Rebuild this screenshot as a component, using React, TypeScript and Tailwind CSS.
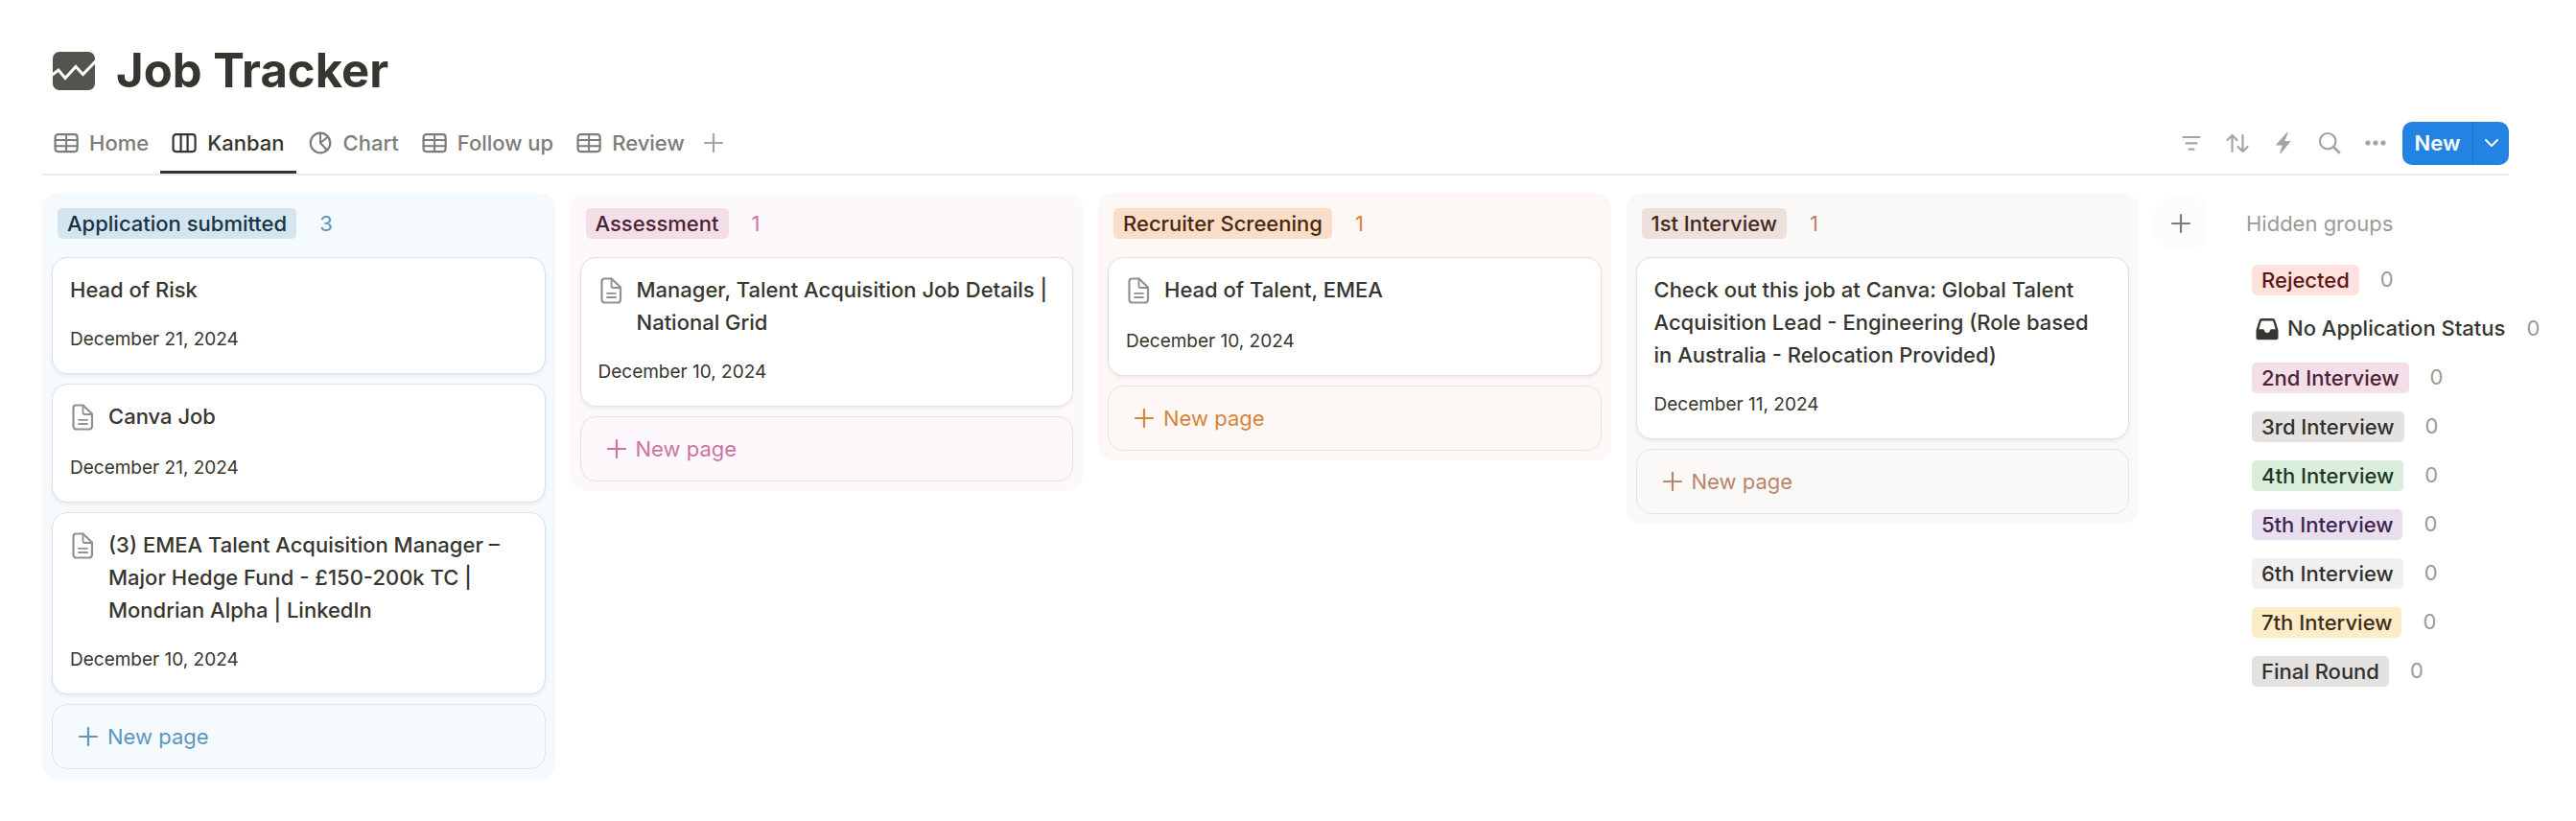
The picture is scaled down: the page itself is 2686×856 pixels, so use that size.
import type { ReactNode } from 'react'
import { clsx } from 'clsx'

interface Card {
    title: string
    date: string
    hasPage?: boolean
}

interface Group {
    name: string
    cards: Card[]
    column: string
    tag: string
    accent: string
}

interface HiddenGroup {
    name: string
    tag?: string
}

const TABS = [
    { label: 'Home', icon: <TableIcon /> },
    { label: 'Kanban', icon: <BoardIcon />, active: true },
    { label: 'Chart', icon: <ChartIcon /> },
    { label: 'Follow up', icon: <TableIcon /> },
    { label: 'Review', icon: <TableIcon /> },
]

const TOOLS = [
    { label: 'Filter', icon: <FilterIcon /> },
    { label: 'Sort', icon: <SortIcon /> },
    { label: 'Automations', icon: <BoltIcon /> },
    { label: 'Search', icon: <SearchIcon /> },
    { label: 'More', icon: <DotsIcon /> },
]

const GROUPS: Group[] = [
    {
        name: 'Application submitted',
        column: 'bg-[#f4fafd]',
        tag: 'bg-[#d3e5ef] text-[#183347]',
        accent: 'text-[#5b97bd]',
        cards: [
            { title: 'Head of Risk', date: 'December 21, 2024' },
            { title: 'Canva Job', date: 'December 21, 2024', hasPage: true },
            {
                title: '(3) EMEA Talent Acquisition Manager – Major Hedge Fund - £150-200k TC | Mondrian Alpha | LinkedIn',
                date: 'December 10, 2024',
                hasPage: true,
            },
        ],
    },
    {
        name: 'Assessment',
        column: 'bg-[#fcf8fc]',
        tag: 'bg-[#f4dfe8] text-[#4c2337]',
        accent: 'text-[#cd749f]',
        cards: [
            { title: 'Manager, Talent Acquisition Job Details | National Grid', date: 'December 10, 2024', hasPage: true },
        ],
    },
    {
        name: 'Recruiter Screening',
        column: 'bg-[#fdf8f5]',
        tag: 'bg-[#fadec9] text-[#49290e]',
        accent: 'text-[#d9833b]',
        cards: [{ title: 'Head of Talent, EMEA', date: 'December 10, 2024', hasPage: true }],
    },
    {
        name: '1st Interview',
        column: 'bg-[#faf9f8]',
        tag: 'bg-[#eee0da] text-[#442a1e]',
        accent: 'text-[#bb846c]',
        cards: [
            {
                title: 'Check out this job at Canva: Global Talent Acquisition Lead - Engineering (Role based in Australia - Relocation Provided)',
                date: 'December 11, 2024',
            },
        ],
    },
]

const HIDDEN_GROUPS: HiddenGroup[] = [
    { name: 'Rejected', tag: 'bg-[#ffe2dd] text-[#5d1715]' },
    { name: 'No Application Status' },
    { name: '2nd Interview', tag: 'bg-[#f4dfe9] text-[#4c2337]' },
    { name: '3rd Interview', tag: 'bg-[#e3e2e0] text-[#32302c]' },
    { name: '4th Interview', tag: 'bg-[#dbeddb] text-[#1c3829]' },
    { name: '5th Interview', tag: 'bg-[#e8deee] text-[#412454]' },
    { name: '6th Interview', tag: 'bg-[#f0f0f0] text-[#32302c]' },
    { name: '7th Interview', tag: 'bg-[#fdecc8] text-[#402c1b]' },
    { name: 'Final Round', tag: 'bg-[#e3e2e0] text-[#32302c]' },
]

function LineIcon({ className, children }: { className?: string; children: ReactNode }) {
    return (
        <svg
            viewBox="0 0 28 28"
            className={clsx('size-7 shrink-0', className)}
            fill="none"
            stroke="currentColor"
            strokeWidth="2.2"
            strokeLinecap="round"
            strokeLinejoin="round"
            aria-hidden="true"
        >
            {children}
        </svg>
    )
}

function TrackerIcon() {
    return (
        <svg viewBox="0 0 44 40" className="h-10 w-11 shrink-0" aria-hidden="true">
            <rect width="44" height="40" rx="7" fill="#55534e" />
            <path d="M-1 24.500 L6 19 L13 27.500 L24 15.500 L31.500 23.500 L45 9.500" fill="none" stroke="#fff" strokeWidth="3" />
        </svg>
    )
}

function TableIcon() {
    return (
        <LineIcon>
            <rect x="1.600" y="5.100" width="23" height="18" rx="3" />
            <path d="M1.600 11h23M1.600 17.200h23M13.100 5.100v18" strokeWidth="2" />
        </LineIcon>
    )
}

function BoardIcon() {
    return (
        <LineIcon>
            <rect x="1.600" y="5.100" width="23" height="18" rx="3" />
            <path d="M9.600 5.100v18M16.600 5.100v18" />
        </LineIcon>
    )
}

function ChartIcon() {
    return (
        <LineIcon>
            <circle cx="13" cy="14" r="10.300" />
            <path d="M13 3.700V14l8-6.500M13 14l7 7.500" strokeWidth="2" />
        </LineIcon>
    )
}

function PlusIcon({ className }: { className?: string }) {
    return (
        <LineIcon className={className}>
            <path d="M14 5v18M5 14h18" />
        </LineIcon>
    )
}

function FilterIcon() {
    return (
        <LineIcon>
            <path d="M5.500 8h17M8.500 14.300h11M11.500 20.600h5" />
        </LineIcon>
    )
}

function SortIcon() {
    return (
        <LineIcon>
            <path d="M8.500 23V6M3.500 11l5-5 5 5M19.500 6v17M14.500 18l5 5 5-5" />
        </LineIcon>
    )
}

function BoltIcon() {
    return (
        <svg viewBox="0 0 28 28" className="size-7" fill="currentColor" aria-hidden="true">
            <path d="M17.500 3.300 6.500 15.400c-.4.500-.1 1 .5 1h5.800l-2.500 7.800c-.2.800.6 1.200 1.100.6L21 12.900c.4-.5.100-1-.5-1h-5.300l3.300-8c.3-.8-.5-1.200-1-.6Z" />
        </svg>
    )
}

function SearchIcon() {
    return (
        <LineIcon>
            <circle cx="12.200" cy="12.200" r="8.200" />
            <path d="m18.500 18.500 5.500 5.500" strokeWidth="2.800" />
        </LineIcon>
    )
}

function DotsIcon() {
    return (
        <svg viewBox="0 0 28 28" className="size-7" fill="currentColor" aria-hidden="true">
            <circle cx="6" cy="14" r="2.600" />
            <circle cx="14" cy="14" r="2.600" />
            <circle cx="22" cy="14" r="2.600" />
        </svg>
    )
}

function PageIcon() {
    return (
        <LineIcon className="mt-1 text-[#91918e]">
            <path d="M6.500 1.500h7L23 10.500v13a3 3 0 0 1-3 3H6.500a3 3 0 0 1-3-3v-19a3 3 0 0 1 3-3Z" />
            <path d="M13.500 1.500v7.500a2 2 0 0 0 2 2h7.500M9 16.800h9M9 21h9" strokeWidth="1.800" />
        </LineIcon>
    )
}

function InboxIcon() {
    return (
        <svg viewBox="0 0 24 24" className="size-6 shrink-0" aria-hidden="true">
            <path
                fill="#37352f"
                fillRule="evenodd"
                d="M6.500 1h11c1.500 0 2.400.7 2.800 2l3 9.500c.1.400.2.800.2 1.200V21c0 1.400-.8 2.200-2.200 2.200H2.700C1.300 23.200.5 22.400.5 21v-7.300c0-.4.100-.8.200-1.200L3.700 3C4.100 1.700 5 1 6.500 1Zm.3 2.400c-.5 0-.8.200-1 .7L3.300 12.300h4.500c.6 0 1 .4 1.100 1 .2 1.600 1.500 2.700 3.100 2.700s2.900-1.100 3.100-2.700c.1-.6.500-1 1.100-1h4.500L18.200 4.100c-.2-.5-.5-.7-1-.7H6.800Z"
            />
        </svg>
    )
}

function Tag({ name, color }: { name: string; color: string }) {
    return <span className={clsx('rounded-[5px] px-[10px] text-[22px] leading-8 font-medium whitespace-nowrap', color)}>{name}</span>
}

function BoardCard({ card }: { card: Card }) {
    return (
        <article className="rounded-2xl border border-[#dfe1e1] bg-white px-[18px] pt-4 pb-[18px] shadow-[0_2px_4px_rgba(15,15,15,0.06)]">
            <div className={clsx('flex gap-3', card.hasPage && 'min-h-9')}>
                {card.hasPage && <PageIcon />}
                <h3 className="text-[22px] leading-[34px] font-medium">{card.title}</h3>
            </div>
            <p className="mt-[18px] text-[19px] leading-[34px]">{card.date}</p>
        </article>
    )
}

function BoardColumn({ group }: { group: Group }) {
    return (
        <section className={clsx('flex min-w-0 flex-1 flex-col gap-[10px] rounded-2xl p-[10px]', group.column)}>
            <header className="flex h-[47px] items-center gap-6 px-[6px] pb-[3px]">
                <Tag name={group.name} color={group.tag} />
                <span className={clsx('text-[22px]', group.accent)}>{group.cards.length}</span>
            </header>
            {group.cards.map((card) => (
                <BoardCard key={card.title} card={card} />
            ))}
            <button
                type="button"
                className={clsx('flex h-[68px] items-center gap-[6px] rounded-2xl border border-[#e2e5e6] px-[23px] text-[22px]', group.accent)}
            >
                <PlusIcon />
                New page
            </button>
        </section>
    )
}

function HiddenGroups() {
    return (
        <aside className="w-[316px] shrink-0 pl-6">
            <h2 className="h-[65px] text-[22px] leading-[65px] text-[#9b9a97]">Hidden groups</h2>
            <ul className="pl-[6px]">
                {HIDDEN_GROUPS.map((group) => (
                    <li key={group.name} className="flex h-[51px] items-center gap-[22px] whitespace-nowrap">
                        {group.tag ? (
                            <Tag name={group.name} color={group.tag} />
                        ) : (
                            <span className="flex items-center gap-[9px] pl-1 text-[22px] font-medium">
                                <InboxIcon />
                                {group.name}
                            </span>
                        )}
                        <span className="text-[22px] text-[#9b9a97]">0</span>
                    </li>
                ))}
            </ul>
        </aside>
    )
}

export default function App() {
    return (
        <main className="min-h-screen bg-white pt-11 pb-11 pl-11 font-['Inter',sans-serif] text-[#37352f]">
            {/* Title */}
            <div className="flex h-[60px] items-center gap-[22px] pl-[11px]">
                <TrackerIcon />
                <h1 className="text-[49px] leading-[60px] font-bold">Job Tracker</h1>
            </div>

            {/* View tabs and toolbar */}
            <div className="mt-[13px] mr-[70px] flex h-[66px] items-stretch justify-between border-b-2 border-[#ececeb]">
                <nav className="flex">
                    {TABS.map((tab) => (
                        <a
                            key={tab.label}
                            href="#"
                            className={clsx(
                                'flex items-center gap-[9px] border-b-[3px] px-3 pt-[3px] text-[22px] font-medium',
                                tab.active ? 'border-[#37352f]' : 'border-transparent text-[#7d7c78]'
                            )}
                        >
                            {tab.icon}
                            {tab.label}
                        </a>
                    ))}
                    <button type="button" aria-label="Add view" className="ml-1 text-[#a5a4a1]">
                        <PlusIcon />
                    </button>
                </nav>
                <div className="flex items-center">
                    {TOOLS.map((tool) => (
                        <button key={tool.label} type="button" aria-label={tool.label} className="flex w-12 justify-center text-[#a5a4a0]">
                            {tool.icon}
                        </button>
                    ))}
                    <div className="ml-1 flex h-[45px] overflow-hidden rounded-[10px] bg-[#2383e2] text-white">
                        <button type="button" className="w-[74px] border-r border-[#1d70c3] text-[22px] font-semibold">
                            New
                        </button>
                        <button type="button" aria-label="More new options" className="flex w-[37px] items-center justify-center">
                            <svg viewBox="0 0 14 10" className="h-[10px] w-[14px]" fill="none" stroke="currentColor" strokeWidth="2" aria-hidden="true">
                                <path d="m1 2 6 6 6-6" strokeLinecap="round" strokeLinejoin="round" />
                            </svg>
                        </button>
                    </div>
                </div>
            </div>

            {/* Board */}
            <div className="flex items-start gap-4 pt-[18px] pr-[52px]">
                {GROUPS.map((group) => (
                    <BoardColumn key={group.name} group={group} />
                ))}
                <button
                    type="button"
                    aria-label="Add group"
                    className="mt-[5px] flex h-[53px] w-14 shrink-0 items-center justify-center rounded-2xl bg-[#fcfcfb] text-[#7d7c78]"
                >
                    <PlusIcon />
                </button>
                <HiddenGroups />
            </div>
        </main>
    )
}
